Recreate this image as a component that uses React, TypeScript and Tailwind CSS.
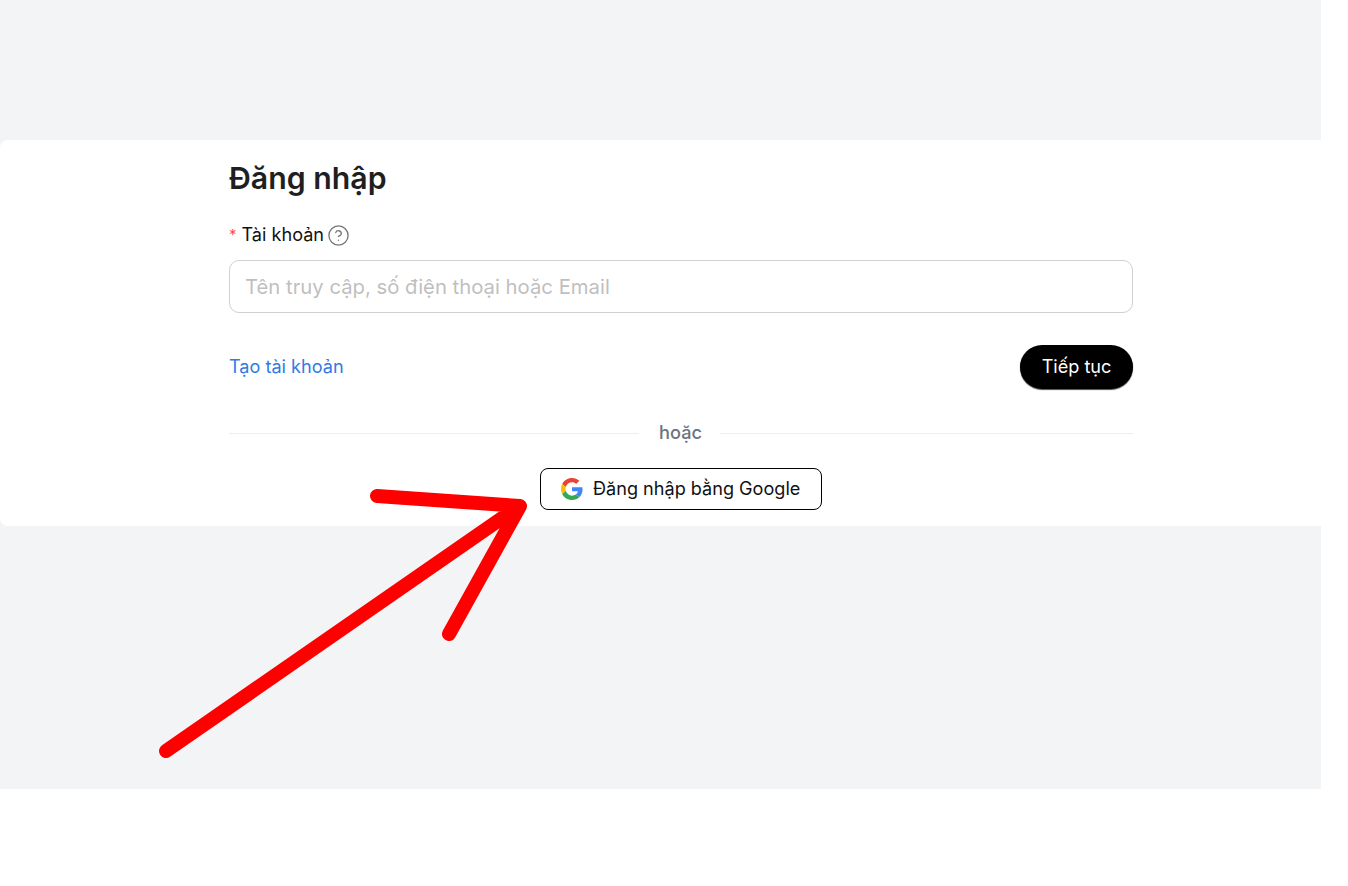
import { CircleHelp } from "lucide-react";

function GoogleIcon() {
  return (
    <svg width="22" height="22" viewBox="0 0 48 48">
      <path fill="#EA4335" d="M24 9.5c3.54 0 6.71 1.22 9.21 3.6l6.85-6.85C35.9 2.38 30.47 0 24 0 14.62 0 6.51 5.38 2.56 13.22l7.98 6.19C12.43 13.72 17.74 9.5 24 9.5z" />
      <path fill="#4285F4" d="M46.98 24.55c0-1.57-.15-3.09-.38-4.55H24v9.02h12.94c-.58 2.96-2.26 5.48-4.78 7.18l7.73 6c4.51-4.18 7.09-10.36 7.09-17.65z" />
      <path fill="#FBBC05" d="M10.53 28.59c-.48-1.45-.76-2.99-.76-4.59s.27-3.14.76-4.59l-7.98-6.19C.92 16.46 0 20.12 0 24c0 3.88.92 7.54 2.56 10.78l7.97-6.19z" />
      <path fill="#34A853" d="M24 48c6.48 0 11.93-2.13 15.89-5.81l-7.73-6c-2.15 1.45-4.92 2.3-8.16 2.3-6.26 0-11.57-4.22-13.47-9.91l-7.98 6.19C6.51 42.62 14.62 48 24 48z" />
    </svg>
  );
}

export default function App() {
  return (
    <div className="relative h-[886px] w-[1348px] overflow-hidden bg-white font-['Inter',sans-serif] text-[#1f1f1f]">
      <div className="h-[789px] w-[1321px] bg-[#f3f4f6] pt-[140px]">
        <div className="h-[386px] rounded-l-lg bg-white pl-[229px]">
          <div className="w-[904px]">
            <h1 className="pt-[17px] text-[30.25px] leading-[42px] font-semibold text-[#1f1f1f]">Đăng nhập</h1>

            <div className="mt-[24px] flex h-[24px] items-center text-[18.1px] text-[#111]">
              <span className="mr-[5px] text-[15px] text-[#ff4d4f]">*</span>
              <span>Tài khoản</span>
              <CircleHelp className="ml-[3px] h-[23px] w-[23px] text-[#777]" strokeWidth={1.4} />
            </div>

            <input
              className="mt-[13px] h-[53px] w-full rounded-[10px] border border-[#d0d0d0] px-[15px] text-[20.3px] outline-none placeholder:text-[#bfbfbf]"
              placeholder="Tên truy cập, số điện thoại hoặc Email"
            />

            <div className="mt-[32px] flex h-[45px] items-center justify-between">
              <a className="pb-[2px] text-[18.1px] text-[#2f7be5]">Tạo tài khoản</a>
              <button className="h-[44px] w-[113px] self-start rounded-full bg-black pb-[1px] text-[18.1px] text-white shadow-[0_1px_1px_rgba(0,0,0,0.7)]">
                Tiếp tục
              </button>
            </div>

            <div className="mt-[32px] flex h-[22px] items-center">
              <div className="h-px flex-1 bg-[#eeeeee]" />
              <span className="pr-[18px] pl-[20px] text-[18.2px] font-medium text-[#6b7280]">hoặc</span>
              <div className="h-px w-[413px] bg-[#eeeeee]" />
            </div>

            <div className="mt-[24px] pl-[311px]">
              <button className="flex h-[42px] w-[282px] items-center gap-[10px] rounded-lg border border-black pl-[20px] text-[18.1px] text-[#111]">
                <GoogleIcon />
                <span>Đăng nhập bằng Google</span>
              </button>
            </div>
          </div>
        </div>
      </div>

      {/* arrow drawn on top of the screenshot */}
      <svg className="absolute top-0 left-0" width="1348" height="886" fill="none">
        <path
          d="M166 751 L518 507 M377 496 L520 506 L449 634"
          stroke="#fe0000"
          strokeWidth="14"
          strokeLinecap="round"
          strokeLinejoin="round"
        />
      </svg>
    </div>
  );
}
